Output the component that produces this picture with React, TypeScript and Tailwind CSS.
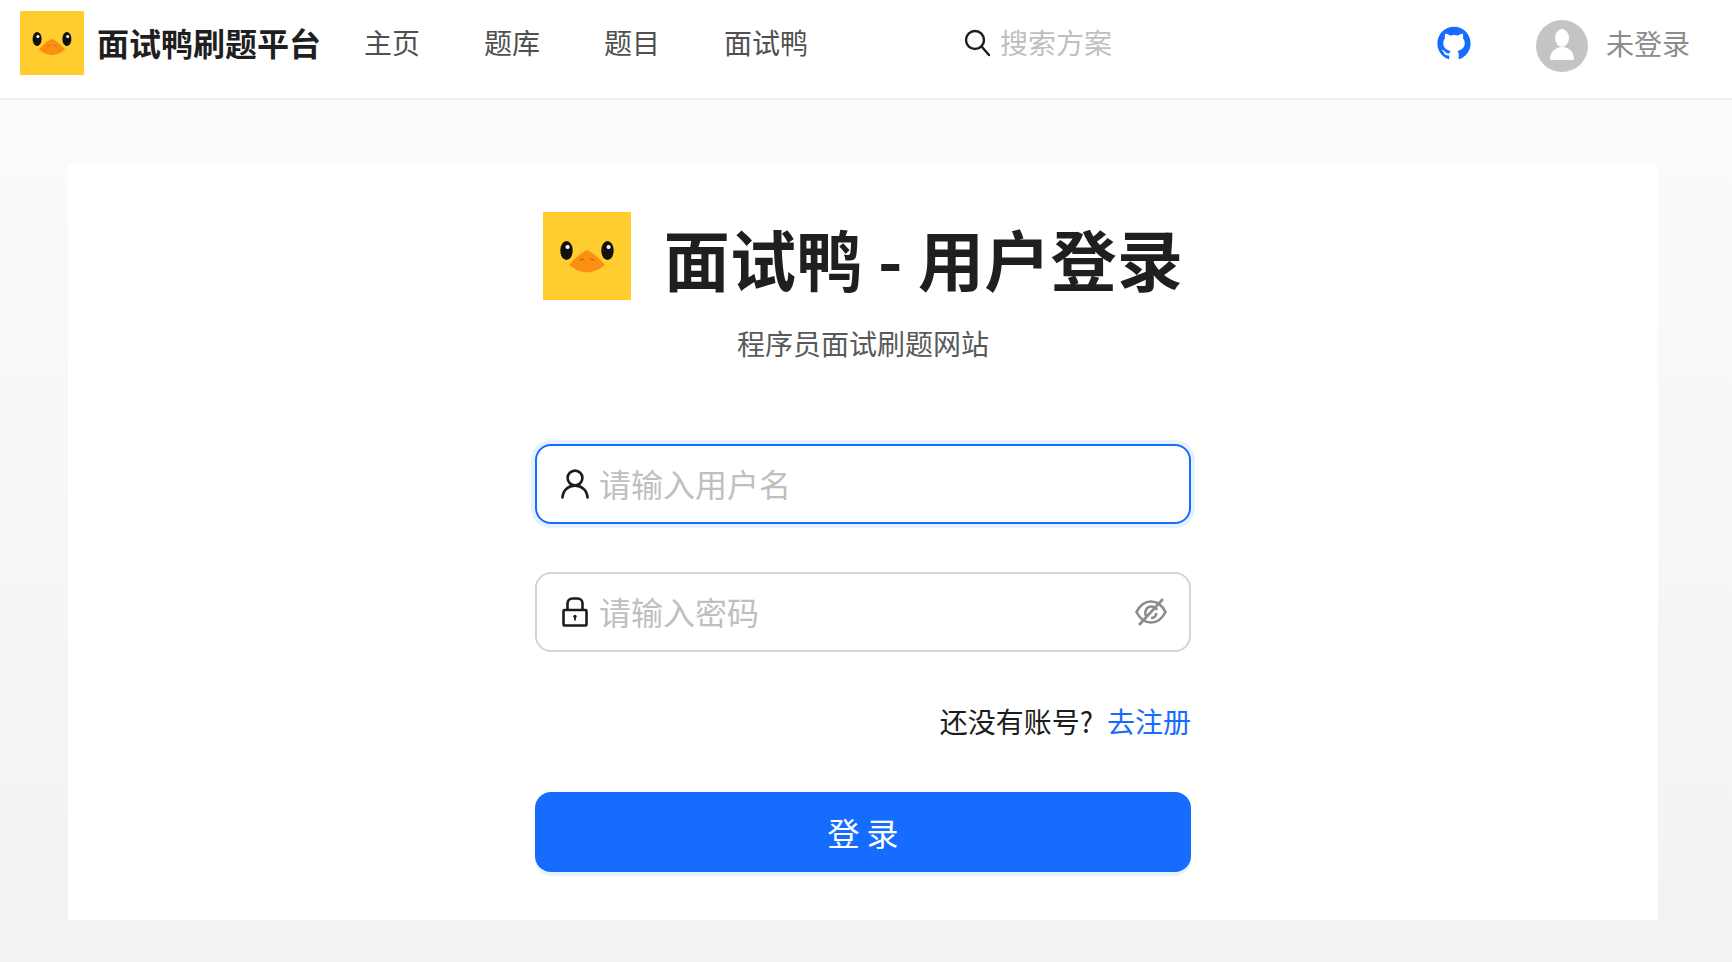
import React from 'react';
import { AiFillGithub } from 'react-icons/ai';

const cjk = { fontFamily: '"Noto Sans CJK SC", "Noto Sans", sans-serif' };

const Duck = ({ className }: { className: string }) => (
  <svg viewBox="0 0 88 88" className={className}>
    <rect width="88" height="88" fill="#ffcd2e" />
    <ellipse cx="23.5" cy="38.5" rx="6.2" ry="9.5" fill="#111" />
    <ellipse cx="64.5" cy="38.5" rx="6.2" ry="9.5" fill="#111" />
    <circle cx="24.6" cy="35" r="2.1" fill="#fff" />
    <circle cx="65.6" cy="35" r="2.1" fill="#fff" />
    <path d="M26 53 Q34 43 44 38 Q54 43 62 53 Q54 60 44 60.5 Q34 60 26 53Z" fill="#fb8f14" />
    <path d="M37 48.5 Q39 46.5 41 47.5 M47 47.5 Q49 46.5 51 48.5" stroke="#c9640f" strokeWidth="1.2" fill="none" />
  </svg>
);

const SearchIcon = () => (
  <svg viewBox="0 0 26 28" className="w-[26px] h-[28px]" fill="none" stroke="#1c1c1c" strokeWidth="2.4">
    <circle cx="11" cy="11" r="9" />
    <path d="M17.5 17.5 L25 26" strokeLinecap="round" />
  </svg>
);

const UserIcon = () => (
  <svg viewBox="0 0 28 30" className="w-[28px] h-[30px] shrink-0" fill="none" stroke="#1c1c1c" strokeWidth="2.6">
    <circle cx="14" cy="9" r="7.4" />
    <path d="M1.5 28.5 C2 21 7.5 16.6 14 16.6 C20.5 16.6 26 21 26.5 28.5" strokeLinecap="round" />
  </svg>
);

const LockIcon = () => (
  <svg viewBox="0 0 26 30" className="w-[26px] h-[30px] shrink-0 ml-px" fill="none" stroke="#1c1c1c" strokeWidth="2.6">
    <path d="M5.5 13 V6.5 C5.5 3.5 7.5 1.5 10.5 1.5 H15.5 C18.5 1.5 20.5 3.5 20.5 6.5 V13" />
    <rect x="1.5" y="13" width="23" height="15.5" rx="1" />
    <circle cx="13" cy="19.5" r="1.7" fill="#1c1c1c" stroke="none" />
    <path d="M13 20 V23.5" strokeWidth="1.8" />
  </svg>
);

const EyeOffIcon = () => (
  <svg viewBox="0 0 32 28" className="w-[32px] h-[28px] shrink-0" fill="none" stroke="#8c8c8c" strokeWidth="2.6">
    <path d="M1.5 14 C5 7 10 3.5 16 3.5 C22 3.5 27 7 30.5 14 C27 21 22 24.5 16 24.5 C10 24.5 5 21 1.5 14Z" />
    <path d="M11 18 C9 13 12 8.5 16 8.5 C19 8.5 21 10 22 12 M21.5 15 C21 18 19 20 16 20" />
    <path d="M4 27 L28 1" />
  </svg>
);

const Avatar = () => (
  <svg viewBox="0 0 52 52" className="w-[52px] h-[52px] mt-[6px]">
    <circle cx="26" cy="26" r="26" fill="#c4c4c4" />
    <ellipse cx="26" cy="18" rx="7" ry="9" fill="#fff" />
    <path d="M14 40 C14 32 19 27 26 27 C33 27 38 32 38 40Z" fill="#fff" />
  </svg>
);

const NavItem = ({ label }: { label: string }) => (
  <a className="text-[28px] text-[#505050] leading-[40px]">{label}</a>
);

export default function App() {
  return (
    <div className="min-h-[962px] bg-gradient-to-b from-[#fcfcfc] to-[#f2f2f2] text-[#1c1c1c]" style={cjk}>
      <header className="h-[100px] bg-white border-b-2 border-[#f0f0f0] flex items-center pl-5 pr-[42px] pb-3">
        <Duck className="w-16 h-16 shrink-0" />
        <h1 className="ml-[13px] -mt-[3px] text-[32px] font-bold text-[#1f1f1f] whitespace-nowrap">面试鸭刷题平台</h1>
        <nav className="ml-[43px] -mt-[2px] flex items-center gap-[64px]">
          <NavItem label="主页" />
          <NavItem label="题库" />
          <NavItem label="题目" />
          <NavItem label="面试鸭" />
        </nav>
        <div className="ml-[156px] flex items-center gap-[10px]">
          <SearchIcon />
          <span className="-mt-[2px] text-[28px] text-[#bfbfbf]">搜索方案</span>
        </div>
        <div className="ml-auto flex items-center">
          <AiFillGithub className="text-[#166cff] w-[38px] h-[38px]" />
          <div className="ml-[63px] flex items-center gap-[18px]">
            <Avatar />
            <span className="text-[28px] text-[#8c8c8c]">未登录</span>
          </div>
        </div>
      </header>

      <main className="mx-[68px] mt-[64px] w-[1590px] h-[756px] bg-white flex flex-col items-center pt-[47px]">
        <div className="flex items-center gap-[33px]">
          <Duck className="w-[88px] h-[88px]" />
          <h2 className="text-[66px] leading-[88px] mt-[2px] tracking-[0.3px] font-bold text-[#1f1f1f]">面试鸭 - 用户登录</h2>
        </div>
        <p className="mt-[20px] text-[28px] leading-[44px] text-[#595959]">程序员面试刷题网站</p>

        <div className="w-[656px] mt-[79px] flex flex-col">
          <div className="h-20 rounded-2xl border-2 border-[#166cff] shadow-[0_0_0_4px_#e6f2ff] flex items-center pl-6 pr-[22px] gap-[10px]">
            <UserIcon />
            <span className="text-[32px] text-[#bfbfbf] -mt-[3px]">请输入用户名</span>
          </div>
          <div className="h-20 mt-12 rounded-2xl border-2 border-[#d4d4d4] flex items-center pl-6 pr-[22px] gap-[11px]">
            <LockIcon />
            <span className="text-[32px] text-[#bfbfbf] -mt-[3px]">请输入密码</span>
            <span className="ml-auto">
              <EyeOffIcon />
            </span>
          </div>
          <div className="mt-[47px] h-[44px] flex justify-end items-center text-[28px]">
            <span>还没有账号?</span>
            <a className="ml-[14px] text-[#166cff]">去注册</a>
          </div>
          <button className="mt-[49px] h-20 rounded-2xl bg-[#166cff] text-white text-[32px] shadow-[0_4px_0_#e6f4ff]">
            登 录
          </button>
        </div>
      </main>
    </div>
  );
}
